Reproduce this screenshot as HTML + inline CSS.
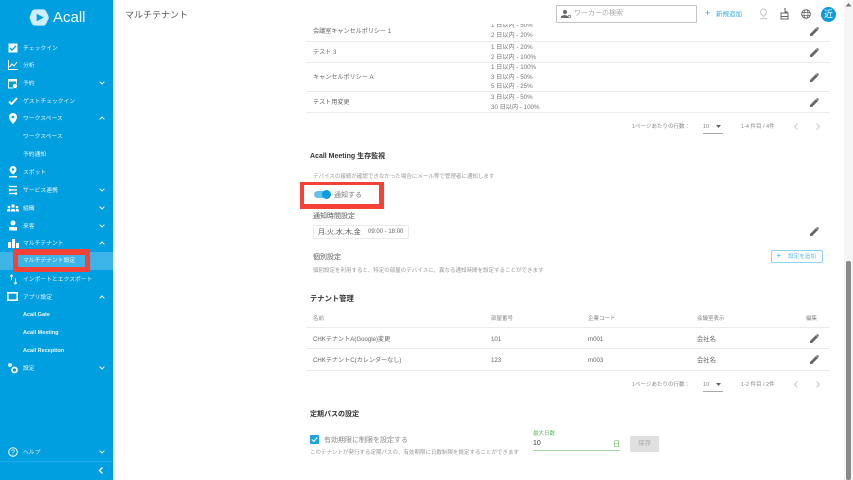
<!DOCTYPE html>
<html lang="ja">
<head>
<meta charset="utf-8">
<style>
html,body{margin:0;padding:0;width:853px;height:480px;overflow:hidden;background:#fff}
body{position:relative;font-family:"Liberation Sans","Noto Sans CJK JP",sans-serif;color:#555}
.a{position:absolute;white-space:nowrap}
#side{position:absolute;left:0;top:0;width:113px;height:480px;background:#009fe0;color:#fff}
.m{position:absolute;left:23px;font-size:5.8px;line-height:10px;color:#e8f6fd;white-space:nowrap}
.s{position:absolute;left:23px;font-size:5.5px;line-height:10px;color:#eaf7fd;white-space:nowrap;font-weight:bold}
.n{font-size:5.8px;font-weight:normal}
.c{position:absolute;left:99px;width:6px;height:4px}
.i{position:absolute}
.t{position:absolute;font-size:6.1px;line-height:10px;color:#666;white-space:nowrap}
.sm{position:absolute;font-size:6.2px;line-height:9.6px;color:#777;white-space:nowrap}
.h{position:absolute;left:310px;font-size:7px;line-height:11px;font-weight:bold;color:#333;white-space:nowrap}
.g{position:absolute;font-size:5.5px;line-height:9px;color:#888;white-space:nowrap}
.line{position:absolute;left:306px;width:524px;height:1px;background:#ececec}
</style>
</head>
<body>
<div id="side">
  <svg class="i" style="left:29px;top:8px" width="20" height="19" viewBox="0 0 21 19"><path d="M7 1 L15 1 Q17 1 18 3 L20.500 8 Q21 9.500 20.500 11 L18 16 Q17 18 15 18 L7 18 Q4 18 3 16 L1 11 Q.3 9.500 1 8 L3 3 Q4 1 7 1Z" fill="#cfeefb"/><path d="M8 5.500 L15.500 9.500 L8 13.500Z" fill="#009fe0"/></svg>
  <div class="a" style="left:53px;top:8px;font-size:15px;line-height:20px;color:#f2fbff">Acall</div>

  <svg class="i" style="left:8px;top:43px" width="10" height="10" viewBox="0 0 10 10"><rect width="9" height="9" x=".5" y=".5" fill="#fff"/><path d="M2 5l2 2 4-4" stroke="#009fe0" stroke-width="1.300" fill="none"/></svg>
  <div class="m" style="top:44px">チェックイン</div>
  <svg class="i" style="left:8px;top:60px" width="10" height="10" viewBox="0 0 10 10"><path d="M.5 0V9.500H10" stroke="#fff" stroke-width="1" fill="none"/><path d="M1.500 7L4 4l2 2 3-4" stroke="#fff" stroke-width="1" fill="none"/></svg>
  <div class="m" style="top:61px">分析</div>
  <svg class="i" style="left:8px;top:78px" width="10" height="11" viewBox="0 0 10 11"><rect x=".5" y="1.500" width="8" height="8.500" fill="none" stroke="#fff"/><rect x="1" y="1" width="7.500" height="2.500" fill="#fff"/><circle cx="7" cy="8" r="2.500" fill="#fff" stroke="#009fe0" stroke-width=".6"/></svg>
  <div class="m" style="top:79px">予約</div>
  <svg class="i" style="left:8px;top:97px" width="10" height="8" viewBox="0 0 10 8"><path d="M1 4.500l2.500 2.500L9 1" stroke="#fff" stroke-width="2" fill="none"/></svg>
  <div class="m" style="top:97px">ゲストチェックイン</div>
  <svg class="i" style="left:9px;top:113px" width="8" height="11" viewBox="0 0 8 11"><path d="M4 0a4 4 0 0 1 4 4c0 3-4 7-4 7S0 7 0 4a4 4 0 0 1 4-4z" fill="#fff"/><circle cx="4" cy="4" r="1.300" fill="#009fe0"/></svg>
  <div class="m" style="top:114px">ワークスペース</div>
  <div class="s n" style="top:132px">ワークスペース</div>
  <div class="s n" style="top:150px">予約通知</div>
  <svg class="i" style="left:8px;top:166px" width="10" height="12" viewBox="0 0 10 12"><path d="M5 0a3.500 3.500 0 0 1 3.500 3.500C8.500 6 5 8.500 5 8.500S1.500 6 1.500 3.500A3.500 3.500 0 0 1 5 0z" fill="#fff"/><circle cx="5" cy="3.500" r="1.200" fill="#009fe0"/><rect x="1" y="10" width="8" height="1.500" fill="#fff"/></svg>
  <div class="m" style="top:168px">スポット</div>
  <svg class="i" style="left:8px;top:185px" width="10" height="10" viewBox="0 0 10 10"><path d="M1 1.500H9M9 5H1M1 8.500H9" stroke="#fff" stroke-width="1.200" fill="none"/><circle cx="2" cy="5" r="1.300" fill="#fff"/><circle cx="8" cy="8.500" r="1.300" fill="#fff"/></svg>
  <div class="m" style="top:186px">サービス連携</div>
  <svg class="i" style="left:7px;top:204px" width="12" height="8" viewBox="0 0 12 8"><circle cx="6" cy="2" r="1.700" fill="#fff"/><circle cx="2" cy="3" r="1.300" fill="#fff"/><circle cx="10" cy="3" r="1.300" fill="#fff"/><path d="M3.500 7.500V6Q6 3.500 8.500 6V7.500ZM0 7.500V6Q1 4.500 3 5V7.500ZM12 7.500V6Q11 4.500 9 5V7.500Z" fill="#fff"/></svg>
  <div class="m" style="top:204px">組織</div>
  <svg class="i" style="left:8px;top:220px" width="10" height="11" viewBox="0 0 10 11"><circle cx="5" cy="3" r="2.500" fill="#fff"/><path d="M1 7H9V10.500H1Z" fill="#fff"/></svg>
  <div class="m" style="top:222px">来客</div>
  <svg class="i" style="left:8px;top:238px" width="11" height="10" viewBox="0 0 11 10"><path d="M4 1h3v9H4zM0 4h3v6H0zM8 5h3v5H8z" fill="#fff"/></svg>
  <div class="m" style="top:239px">マルチテナント</div>
  <div class="a" style="left:0;top:252px;width:113px;height:18px;background:#3db4e8"></div>
  <div class="a" style="left:13px;top:249px;width:77px;height:23px;background:#f44336"></div>
  <div class="a" style="left:18px;top:255px;width:67px;height:12px;background:#3db4e8"></div>
  <div class="s n" style="top:256px">マルチテナント設定</div>
  <svg class="i" style="left:9px;top:274px" width="9" height="11" viewBox="0 0 9 11"><path d="M2.500 1V6M1 2.500L2.500 1 4 2.500M6.500 10V4.500M5 8.500L6.500 10 8 8.500" stroke="#fff" stroke-width="1" fill="none"/></svg>
  <div class="m" style="top:275px">インポートとエクスポート</div>
  <svg class="i" style="left:7px;top:292px" width="11" height="9" viewBox="0 0 11 9"><rect x=".8" y=".8" width="9.400" height="7.400" fill="none" stroke="#fff" stroke-width="1.600"/></svg>
  <div class="m" style="top:293px">アプリ設定</div>
  <div class="s" style="top:310px">Acall Gate</div>
  <div class="s" style="top:328px">Acall Meeting</div>
  <div class="s" style="top:346px">Acall Reception</div>
  <svg class="i" style="left:7px;top:362px" width="11" height="12" viewBox="0 0 11 12"><circle cx="3" cy="3" r="2" fill="#cfeefb"/><circle cx="7.500" cy="8" r="2.500" fill="none" stroke="#fff" stroke-width="1.800"/></svg>
  <div class="m" style="top:364px">設定</div>
  <svg class="i" style="left:8px;top:447px" width="10" height="10" viewBox="0 0 10 10"><circle cx="5" cy="5" r="4.300" fill="none" stroke="#fff"/><text x="5" y="7.500" font-size="7" text-anchor="middle" fill="#fff" font-family="Liberation Sans">?</text></svg>
  <div class="m" style="top:448px">ヘルプ</div>
  <div class="a" style="left:0;top:461px;width:113px;height:1px;background:#1cabe6"></div>
  <svg class="i" style="left:98px;top:467px" width="6" height="7" viewBox="0 0 6 7"><path d="M4.500 .5L1.500 3.500l3 3" stroke="#fff" stroke-width="1.400" fill="none"/></svg>

  <svg class="c" style="top:81px" viewBox="0 0 9 6"><path d="M1 1l3.500 3.500L8 1" stroke="#fff" stroke-width="1.500" fill="none"/></svg>
  <svg class="c" style="top:116px" viewBox="0 0 9 6"><path d="M1 5l3.500-3.500L8 5" stroke="#fff" stroke-width="1.500" fill="none"/></svg>
  <svg class="c" style="top:188px" viewBox="0 0 9 6"><path d="M1 1l3.500 3.500L8 1" stroke="#fff" stroke-width="1.500" fill="none"/></svg>
  <svg class="c" style="top:206px" viewBox="0 0 9 6"><path d="M1 1l3.500 3.500L8 1" stroke="#fff" stroke-width="1.500" fill="none"/></svg>
  <svg class="c" style="top:224px" viewBox="0 0 9 6"><path d="M1 1l3.500 3.500L8 1" stroke="#fff" stroke-width="1.500" fill="none"/></svg>
  <svg class="c" style="top:241px" viewBox="0 0 9 6"><path d="M1 5l3.500-3.500L8 5" stroke="#fff" stroke-width="1.500" fill="none"/></svg>
  <svg class="c" style="top:295px" viewBox="0 0 9 6"><path d="M1 5l3.500-3.500L8 5" stroke="#fff" stroke-width="1.500" fill="none"/></svg>
  <svg class="c" style="top:366px" viewBox="0 0 9 6"><path d="M1 1l3.500 3.500L8 1" stroke="#fff" stroke-width="1.500" fill="none"/></svg>
  <svg class="c" style="top:450px" viewBox="0 0 9 6"><path d="M1 1l3.500 3.500L8 1" stroke="#fff" stroke-width="1.500" fill="none"/></svg>
</div>

<!-- header -->
<div class="a" style="left:125px;top:9px;font-size:9px;line-height:12px;color:#555">マルチテナント</div>
<div class="a" style="left:556px;top:5px;width:139px;height:16px;border:1px solid #c4c4c4;border-radius:1px"></div>
<svg class="i" style="left:561px;top:9px" width="11" height="10" viewBox="0 0 11 10"><circle cx="4" cy="3" r="2" fill="#666"/><path d="M0 9V7.500Q4 4.500 7 7.500V9Z" fill="#666"/><circle cx="8.500" cy="7.500" r="1.300" fill="#fff" stroke="#666" stroke-width=".7"/></svg>
<div class="a" style="left:574px;top:9px;font-size:7px;line-height:10px;color:#aaa">ワーカーの検索</div>
<div class="a" style="left:705px;top:8px;font-size:9px;line-height:11px;color:#1ba6e2">+</div>
<div class="a" style="left:716px;top:10px;font-size:6.500px;line-height:10px;color:#35ace3">新規追加</div>
<svg class="i" style="left:759px;top:8px" width="9" height="12" viewBox="0 0 9 12"><path d="M4.500 1a3 3 0 0 1 3 3C7.500 6 4.500 8.500 4.500 8.500S1.500 6 1.500 4a3 3 0 0 1 3-3z" fill="none" stroke="#ccc" stroke-width="1.200"/><rect x="1" y="10" width="7" height="1.200" fill="#ccc"/></svg>
<svg class="i" style="left:780px;top:8px" width="9" height="12" viewBox="0 0 9 12"><path d="M4 0h1v4h2v-1M1 5h7v6H1z" fill="none" stroke="#666"/><rect x="1" y="8" width="7" height="1" fill="#666"/></svg>
<svg class="i" style="left:801px;top:9px" width="10" height="10" viewBox="0 0 10 10"><circle cx="5" cy="5" r="4.300" fill="none" stroke="#666"/><ellipse cx="5" cy="5" rx="2" ry="4.300" fill="none" stroke="#666" stroke-width=".7"/><path d="M.7 3.500H9.300M.7 6.500H9.300" stroke="#666" stroke-width=".7"/></svg>
<div class="a" style="left:821px;top:7px;width:15px;height:15px;border-radius:50%;background:#0a9be0;color:#fff;font-size:9px;line-height:15px;text-align:center">近</div>

<!-- scrollbar -->
<div class="a" style="left:844px;top:0;width:9px;height:480px;background:#f6f6f6"></div>
<svg class="i" style="left:845px;top:2px" width="7" height="5" viewBox="0 0 7 5"><path d="M3.500 1L6.500 4.500H.5Z" fill="#777"/></svg>
<div class="a" style="left:846px;top:261px;width:5px;height:219px;border-radius:2px;background:#8a8a8a"></div>

<!-- policy table -->
<div class="t" style="left:313px;top:27px">会議室キャンセルポリシー 1</div>
<div class="sm" style="left:491px;top:24px;height:4px;overflow:hidden;line-height:10px"><span style="position:relative;top:-3px">1 日以内 - 50%</span></div>
<div class="sm" style="left:491px;top:31px">2 日以内 - 20%</div>
<div class="line" style="top:41px"></div>
<div class="t" style="left:313px;top:48px">テスト 3</div>
<div class="sm" style="left:491px;top:43px">1 日以内 - 20%<br>2 日以内 - 100%</div>
<div class="line" style="top:62px"></div>
<div class="t" style="left:313px;top:73px">キャンセルポリシー A</div>
<div class="sm" style="left:491px;top:63px">1 日以内 - 100%<br>3 日以内 - 50%<br>5 日以内 - 25%</div>
<div class="line" style="top:91px"></div>
<div class="t" style="left:313px;top:98px">テスト用変更</div>
<div class="sm" style="left:491px;top:93px">3 日以内 - 50%<br>30 日以内 - 100%</div>
<div class="line" style="top:112px"></div>

<svg class="i" style="left:810px;top:27px" width="9" height="9" viewBox="0 0 9 9"><path d="M0 9V7L6 1l2 2-6 6ZM6.700.3Q7.200 0 7.700.3L8.700 1.300Q9 1.800 8.700 2.300L8.300 2.700 6.300.7Z" fill="#666"/></svg>
<svg class="i" style="left:810px;top:48px" width="9" height="9" viewBox="0 0 9 9"><path d="M0 9V7L6 1l2 2-6 6ZM6.700.3Q7.200 0 7.700.3L8.700 1.300Q9 1.800 8.700 2.300L8.300 2.700 6.300.7Z" fill="#666"/></svg>
<svg class="i" style="left:810px;top:73px" width="9" height="9" viewBox="0 0 9 9"><path d="M0 9V7L6 1l2 2-6 6ZM6.700.3Q7.200 0 7.700.3L8.700 1.300Q9 1.800 8.700 2.300L8.300 2.700 6.300.7Z" fill="#666"/></svg>
<svg class="i" style="left:810px;top:98px" width="9" height="9" viewBox="0 0 9 9"><path d="M0 9V7L6 1l2 2-6 6ZM6.700.3Q7.200 0 7.700.3L8.700 1.300Q9 1.800 8.700 2.300L8.300 2.700 6.300.7Z" fill="#666"/></svg>

<div class="g" style="left:632px;top:123px">1ページあたりの行数：</div>
<div class="g" style="left:703px;top:123px">10</div>
<svg class="i" style="left:716px;top:125px" width="5" height="3"><path d="M0 0H5L2.500 3Z" fill="#666"/></svg>
<div class="a" style="left:703px;top:133px;width:20px;height:1px;background:#aaa"></div>
<div class="g" style="left:741px;top:123px">1-4 件目 / 4件</div>
<svg class="i" style="left:794px;top:123px" width="4" height="7"><path d="M3.500 .5L.5 3.500l3 3" stroke="#ccc" fill="none"/></svg>
<svg class="i" style="left:816px;top:123px" width="4" height="7"><path d="M.5 .5l3 3-3 3" stroke="#ccc" fill="none"/></svg>

<!-- monitoring -->
<div class="h" style="top:151px">Acall Meeting 生存監視</div>
<div class="a" style="left:313px;top:173px;font-size:5.500px;line-height:9px;color:#999">デバイスの接続が確認できなかった場合にメール等で管理者に通知します</div>
<div class="a" style="left:300px;top:182px;width:84px;height:27px;background:#f44336"></div>
<div class="a" style="left:304px;top:185px;width:75px;height:19px;background:#fff"></div>
<div class="a" style="left:314px;top:191px;width:15px;height:7px;border-radius:4px;background:#62c2ec"></div>
<div class="a" style="left:322px;top:190px;width:9px;height:9px;border-radius:50%;background:#0a9be0"></div>
<div class="a" style="left:334px;top:190px;font-size:7px;line-height:11px;color:#777">通知する</div>
<div class="a" style="left:313px;top:211px;font-size:7px;line-height:11px;color:#555">通知時間設定</div>
<div class="a" style="left:313px;top:225px;width:94px;height:12px;border:1px solid #ececec"></div>
<div class="a" style="left:318px;top:227px;font-size:7px;line-height:11px;color:#555">月,火,水,木,金</div>
<div class="a" style="left:368px;top:227px;font-size:6px;line-height:10px;color:#666">09:00 - 18:00</div>
<svg class="i" style="left:810px;top:227px" width="9" height="9" viewBox="0 0 9 9"><path d="M0 9V7L6 1l2 2-6 6ZM6.700.3Q7.200 0 7.700.3L8.700 1.300Q9 1.800 8.700 2.300L8.300 2.700 6.300.7Z" fill="#666"/></svg>
<div class="a" style="left:313px;top:252px;font-size:7px;line-height:11px;color:#555">個別設定</div>
<div class="a" style="left:771px;top:250px;width:50px;height:11px;border:1px solid #8ed3f2;border-radius:2px"></div>
<div class="a" style="left:776.500px;top:250px;font-size:8px;line-height:12px;color:#35ace3">+</div>
<div class="a" style="left:788px;top:252px;font-size:5.600px;line-height:10px;color:#5bbce8">設定を追加</div>
<div class="a" style="left:313px;top:267px;font-size:5.500px;line-height:9px;color:#999">個別設定を利用すると、特定の部屋のデバイスに、異なる通知時間を設定することができます</div>

<!-- tenant -->
<div class="h" style="top:293px;font-size:7.300px">テナント管理</div>
<div class="g" style="left:313px;top:315px">名前</div>
<div class="g" style="left:491px;top:315px">部屋番号</div>
<div class="g" style="left:588px;top:315px">企業コード</div>
<div class="g" style="left:697px;top:315px">会議室表示</div>
<div class="g" style="left:806px;top:315px">編集</div>
<div class="line" style="top:327px"></div>
<div class="t" style="left:313px;top:335px">CHKテナントA(Google)変更</div>
<div class="t" style="left:491px;top:335px">101</div>
<div class="t" style="left:588px;top:335px">m001</div>
<div class="t" style="left:697px;top:335px;font-size:6.300px">会社名</div>
<svg class="i" style="left:810px;top:334px" width="9" height="9" viewBox="0 0 9 9"><path d="M0 9V7L6 1l2 2-6 6ZM6.700.3Q7.200 0 7.700.3L8.700 1.300Q9 1.800 8.700 2.300L8.300 2.700 6.300.7Z" fill="#666"/></svg>
<div class="line" style="top:348px"></div>
<div class="t" style="left:313px;top:356px">CHKテナントC(カレンダーなし)</div>
<div class="t" style="left:491px;top:356px">123</div>
<div class="t" style="left:588px;top:356px">m003</div>
<div class="t" style="left:697px;top:356px;font-size:6.300px">会社名</div>
<svg class="i" style="left:810px;top:355px" width="9" height="9" viewBox="0 0 9 9"><path d="M0 9V7L6 1l2 2-6 6ZM6.700.3Q7.200 0 7.700.3L8.700 1.300Q9 1.800 8.700 2.300L8.300 2.700 6.300.7Z" fill="#666"/></svg>
<div class="line" style="top:370px"></div>

<div class="g" style="left:632px;top:381px">1ページあたりの行数：</div>
<div class="g" style="left:703px;top:381px">10</div>
<svg class="i" style="left:716px;top:383px" width="5" height="3"><path d="M0 0H5L2.500 3Z" fill="#666"/></svg>
<div class="a" style="left:703px;top:391px;width:20px;height:1px;background:#aaa"></div>
<div class="g" style="left:741px;top:381px">1-2 件目 / 2件</div>
<svg class="i" style="left:794px;top:381px" width="4" height="7"><path d="M3.500 .5L.5 3.500l3 3" stroke="#ccc" fill="none"/></svg>
<svg class="i" style="left:816px;top:381px" width="4" height="7"><path d="M.5 .5l3 3-3 3" stroke="#ccc" fill="none"/></svg>

<!-- pass -->
<div class="h" style="top:409px">定期パスの設定</div>
<svg class="i" style="left:310px;top:435px" width="9" height="9" viewBox="0 0 9 9"><rect width="9" height="9" rx="1" fill="#1ba3e2"/><path d="M1.800 4.500l2 2 3.500-4" stroke="#fff" stroke-width="1.100" fill="none"/></svg>
<div class="a" style="left:324px;top:435px;font-size:7px;line-height:11px;color:#888">有効期限に制限を設定する</div>
<div class="a" style="left:310px;top:449px;font-size:5.500px;line-height:9px;color:#999">このテナントが発行する定期パスの、有効期限に日数制限を設定することができます</div>
<div class="a" style="left:533px;top:430px;font-size:5.500px;line-height:8px;color:#5cb85c">最大日数</div>
<div class="a" style="left:533px;top:439px;font-size:7px;line-height:10px;color:#444">10</div>
<div class="a" style="left:613px;top:439px;font-size:7px;line-height:11px;color:#5cb85c">日</div>
<div class="a" style="left:533px;top:450px;width:87px;height:1px;background:#a5d6a7"></div>
<div class="a" style="left:630px;top:436px;width:29px;height:16px;border-radius:1px;background:#e0e0e0;color:#aaa;font-size:6.500px;line-height:16px;text-align:center">保存</div>
</body>
</html>
